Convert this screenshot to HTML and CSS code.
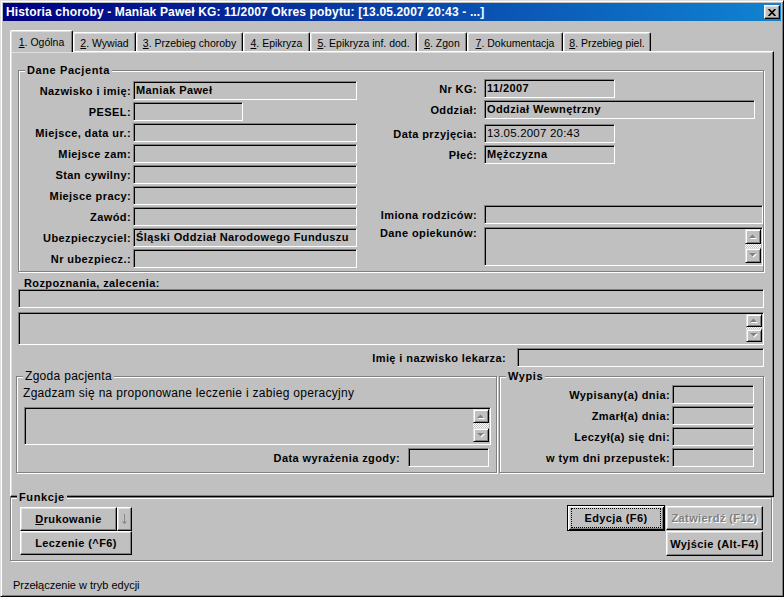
FILE: index.html
```html
<!DOCTYPE html>
<html lang="pl">
<head>
<meta charset="utf-8">
<title>Historia choroby</title>
<link rel="stylesheet" href="styles.css">
</head>
<body>
<div class="window">
  <div class="titlebar">
    <span class="title">Historia choroby - Maniak Paweł KG: 11/2007 Okres pobytu: [13.05.2007 20:43 - ...]</span>
    <span class="close-btn"><svg width="8" height="7" viewBox="0 0 8 7"><path d="M0.6 0 L7.4 7 M7.4 0 L0.6 7" stroke="#000" stroke-width="1.7" fill="none"/></svg></span>
  </div>

  <div class="tabs">
    <div class="tab active"><u>1</u>. Ogólna</div>
    <div class="tab"><u>2</u>. Wywiad</div>
    <div class="tab"><u>3</u>. Przebieg choroby</div>
    <div class="tab"><u>4</u>. Epikryza</div>
    <div class="tab"><u>5</u>. Epikryza inf. dod.</div>
    <div class="tab"><u>6</u>. Zgon</div>
    <div class="tab"><u>7</u>. Dokumentacja</div>
    <div class="tab"><u>8</u>. Przebieg piel.</div>
  </div>

  <div class="panel">
    <div class="group group-patient">
      <span class="legend b">Dane Pacjenta</span>
      <div class="col-left">
        <div class="row"><span class="lbl b">Nazwisko i imię:</span><div class="field w-lg b">Maniak Paweł</div></div>
        <div class="row"><span class="lbl b">PESEL:</span><div class="field w-sm"></div></div>
        <div class="row"><span class="lbl b">Miejsce, data ur.:</span><div class="field w-lg"></div></div>
        <div class="row"><span class="lbl b">Miejsce zam:</span><div class="field w-lg"></div></div>
        <div class="row"><span class="lbl b">Stan cywilny:</span><div class="field w-lg"></div></div>
        <div class="row"><span class="lbl b">Miejsce pracy:</span><div class="field w-lg"></div></div>
        <div class="row"><span class="lbl b">Zawód:</span><div class="field w-lg"></div></div>
        <div class="row"><span class="lbl b">Ubezpieczyciel:</span><div class="field w-lg b">Śląski Oddział Narodowego Funduszu</div></div>
        <div class="row"><span class="lbl b">Nr ubezpiecz.:</span><div class="field w-lg"></div></div>
      </div>
      <div class="col-right">
        <div class="row"><span class="lbl b">Nr KG:</span><div class="field w-131 b">11/2007</div></div>
        <div class="row gap-2"><span class="lbl b">Oddział:</span><div class="field w-271 b">Oddział Wewnętrzny</div></div>
        <div class="row gap-5"><span class="lbl b">Data przyjęcia:</span><div class="field w-131 date">13.05.2007 20:43</div></div>
        <div class="row gap-2"><span class="lbl b">Płeć:</span><div class="field w-131 b">Mężczyzna</div></div>
        <div class="row gap-41"><span class="lbl b">Imiona rodziców:</span><div class="field w-279"></div></div>
        <div class="row row-tall gap-3"><span class="lbl b">Dane opiekunów:</span>
          <div class="field memo w-279">
            <div class="vscroll">
              <span class="sb-btn"><svg width="8" height="5" viewBox="0 0 8 5"><path d="M3.5 0.5 L7 4 L0 4 Z" fill="#fff" transform="translate(1 1)"/><path d="M3.5 0.5 L7 4 L0 4 Z" fill="#808080"/></svg></span>
              <span class="sb-track"></span>
              <span class="sb-btn"><svg width="8" height="5" viewBox="0 0 8 5"><path d="M0 0 L7 0 L3.5 3.5 Z" fill="#fff" transform="translate(1 1)"/><path d="M0 0 L7 0 L3.5 3.5 Z" fill="#808080"/></svg></span>
            </div>
          </div>
        </div>
      </div>
    </div>

    <div class="diag-label b">Rozpoznania, zalecenia:</div>
    <div class="field diag-line"></div>
    <div class="field memo memo-sm diag-memo">
      <div class="vscroll">
        <span class="sb-btn"><svg width="8" height="5" viewBox="0 0 8 5"><path d="M3.5 0.5 L7 4 L0 4 Z" fill="#fff" transform="translate(1 1)"/><path d="M3.5 0.5 L7 4 L0 4 Z" fill="#808080"/></svg></span>
        <span class="sb-track"></span>
        <span class="sb-btn"><svg width="8" height="5" viewBox="0 0 8 5"><path d="M0 0 L7 0 L3.5 3.5 Z" fill="#fff" transform="translate(1 1)"/><path d="M0 0 L7 0 L3.5 3.5 Z" fill="#808080"/></svg></span>
      </div>
    </div>

    <div class="doctor-row">
      <span class="lbl b">Imię i nazwisko lekarza:</span>
      <div class="field w-doctor"></div>
    </div>

    <div class="bottom-groups">
      <div class="group group-consent">
        <span class="legend reg">Zgoda pacjenta</span>
        <div class="consent-text">Zgadzam się na proponowane leczenie i zabieg operacyjny</div>
        <div class="field memo memo-md consent-memo">
          <div class="vscroll">
            <span class="sb-btn"><svg width="8" height="5" viewBox="0 0 8 5"><path d="M3.5 0.5 L7 4 L0 4 Z" fill="#fff" transform="translate(1 1)"/><path d="M3.5 0.5 L7 4 L0 4 Z" fill="#808080"/></svg></span>
            <span class="sb-track"></span>
            <span class="sb-btn"><svg width="8" height="5" viewBox="0 0 8 5"><path d="M0 0 L7 0 L3.5 3.5 Z" fill="#fff" transform="translate(1 1)"/><path d="M0 0 L7 0 L3.5 3.5 Z" fill="#808080"/></svg></span>
          </div>
        </div>
        <div class="consent-date">
          <span class="lbl b">Data wyrażenia zgody:</span>
          <div class="field w-81"></div>
        </div>
      </div>

      <div class="group group-discharge">
        <span class="legend b">Wypis</span>
        <div class="wrow"><span class="lbl b">Wypisany(a) dnia:</span><div class="field w-82"></div></div>
        <div class="wrow"><span class="lbl b">Zmarł(a) dnia:</span><div class="field w-82"></div></div>
        <div class="wrow"><span class="lbl b">Leczył(a) się dni:</span><div class="field w-82"></div></div>
        <div class="wrow"><span class="lbl b">w tym dni przepustek:</span><div class="field w-82"></div></div>
      </div>
    </div>
  </div>

  <div class="group group-functions">
    <span class="legend b">Funkcje</span>
    <div class="fn-left">
      <div class="fn-print">
        <span class="btn btn-print b"><u>D</u>rukowanie</span>
        <span class="btn btn-arrow"><svg width="5" height="12" viewBox="0 0 5 12"><path d="M2.5 1 V11 M0.5 8 L2.5 11 L4.5 8" stroke="#8a8a8a" stroke-width="1" fill="none"/></svg></span>
      </div>
      <span class="btn btn-treat b">Leczenie (^F6)</span>
    </div>
    <div class="fn-right">
      <span class="btn btn-default b"><span class="focus">Edycja (F6)</span></span>
      <span class="btn btn-confirm b disabled">Zatwierdź (F12)</span>
      <span class="btn btn-exit b">Wyjście (Alt-F4)</span>
    </div>
  </div>

  <div class="status">Przełączenie w tryb edycji</div>
</div>
</body>
</html>
```

FILE: styles.css
```css
* { box-sizing: border-box; }
html, body { margin: 0; padding: 0; }
body {
  background: #c0c0c0;
  font-family: "Liberation Sans", Arial, sans-serif;
  font-size: 11px;
  color: #000;
}

.b { font-weight: bold; letter-spacing: 0.4px; }

.window {
  width: 784px;
  height: 597px;
  border: 1px solid;
  border-color: #dfdfdf #000 #000 #dfdfdf;
  box-shadow: inset 1px 1px #fff, inset -1px -1px #808080;
  padding: 2px;
  display: flex;
  flex-direction: column;
}

/* title bar */
.titlebar {
  height: 18px;
  background: linear-gradient(to right, #000080, #1084d0);
  display: flex;
  align-items: center;
  justify-content: space-between;
  padding: 0 1px 0 3px;
}
.title {
  color: #fff;
  font-weight: bold;
  font-size: 12px;
  letter-spacing: 0.15px;
  white-space: nowrap;
}
.close-btn {
  width: 16px;
  height: 14px;
  background: #c0c0c0;
  border: 1px solid;
  border-color: #fff #000 #000 #fff;
  box-shadow: inset -1px -1px #808080, inset 1px 1px #dfdfdf;
  display: flex;
  align-items: center;
  justify-content: center;
}

/* tabs */
.tabs {
  display: flex;
  align-items: flex-end;
  height: 21px;
  margin: 9px 0 0 7px;
  position: relative;
  z-index: 1;
}
.tab {
  height: 19px;
  padding-top: 2px;
  line-height: 16px;
  font-size: 10.5px;
  text-align: center;
  white-space: nowrap;
  border-top: 1px solid #fff;
  border-left: 1px solid #fff;
  border-right: 1px solid #000;
  border-radius: 2px 2px 0 0;
  box-shadow: inset -1px 0 #808080, inset 1px 1px #dfdfdf;
}
.tab.active {
  height: 22px;
  padding-top: 3px;
  margin-bottom: -1px;
  background: #c0c0c0;
}
.tab:nth-child(1) { width: 63px; }
.tab:nth-child(2) { width: 63px; }
.tab:nth-child(3) { width: 107px; }
.tab:nth-child(4) { width: 67px; }
.tab:nth-child(5) { width: 107px; }
.tab:nth-child(6) { width: 50px; }
.tab:nth-child(7) { width: 96px; }
.tab:nth-child(8) { width: 88px; }

/* tab panel */
.panel {
  margin: 0 7px;
  height: 446px;
  border: 1px solid;
  border-color: #fff #000 #000 #fff;
  box-shadow: inset -1px -1px #808080, inset 1px 1px #dfdfdf;
}

/* group boxes */
.group {
  position: relative;
  border: 1px solid #808080;
  box-shadow: inset 1px 1px #fff, 1px 1px #fff;
}
.legend {
  position: absolute;
  top: -7px;
  left: 6px;
  padding: 0 2px;
  line-height: 13px;
  background: #c0c0c0;
  white-space: nowrap;
}
.legend.b { letter-spacing: 0.6px; }
.legend.reg { font-size: 12px; letter-spacing: 0.3px; }

/* fields */
.field {
  height: 19px;
  background: #c0c0c0;
  border: 1px solid;
  border-color: #808080 #fff #fff #808080;
  box-shadow: inset 1px 1px #000;
  padding: 0 2px;
  display: flex;
  align-items: center;
  white-space: nowrap;
  overflow: hidden;
  line-height: 17px;
}
.field.date { font-size: 11.5px; letter-spacing: 0.2px; }

.row { display: flex; align-items: center; height: 19px; }
.lbl { text-align: right; white-space: nowrap; }

/* Dane Pacjenta */
.group-patient {
  margin: 18px 0 0 7px;
  width: 746px;
  height: 202px;
  padding-top: 10px;
  display: flex;
  align-items: flex-start;
}
.col-left { display: flex; flex-direction: column; gap: 2px; }
.col-left .lbl { width: 112px; margin-right: 2px; }
.w-lg { width: 224px; }
.w-sm { width: 110px; }

.col-right { display: flex; flex-direction: column; margin-top: -2px; }
.col-right .lbl { width: 120px; margin-right: 7px; }
.w-131 { width: 131px; }
.w-271 { width: 271px; }
.w-279 { width: 279px; }
.gap-2 { margin-top: 2px; }
.gap-3 { margin-top: 3px; }
.gap-5 { margin-top: 5px; }
.gap-41 { margin-top: 41px; }
.row-tall { height: 39px; align-items: flex-start; }
.row-tall .lbl { line-height: 13px; }
.row-tall .field { height: 39px; }

/* memo with scrollbar */
.field.memo {
  justify-content: flex-end;
  align-items: stretch;
  padding: 1px 1px 2px 0;
}
.vscroll { width: 16px; display: flex; flex-direction: column; }
.sb-btn {
  height: 15px;
  flex: 0 0 auto;
  background: #c0c0c0;
  border: 1px solid;
  border-color: #dfdfdf #000 #000 #dfdfdf;
  box-shadow: inset 1px 1px #fff, inset -1px -1px #808080;
  display: flex;
  align-items: center;
  justify-content: center;
}
.memo-sm .sb-btn { height: 13px; }
.memo-md .sb-btn { height: 14px; }
.sb-track {
  flex: 1;
  background-color: #c0c0c0;
  background-image: conic-gradient(#fff 25%, transparent 0 50%, #fff 0 75%, transparent 0);
  background-size: 2px 2px;
}

/* Rozpoznania */
.diag-label { margin: 5px 0 0 13px; line-height: 12px; }
.diag-line { margin-left: 7px; width: 746px; }
.diag-memo { margin: 4px 0 0 7px; width: 746px; height: 33px; }

.doctor-row {
  display: flex;
  align-items: center;
  justify-content: flex-end;
  margin: 3px 0 0 7px;
  width: 746px;
  height: 19px;
}
.doctor-row .lbl { margin-right: 11px; }
.w-doctor { width: 247px; }

/* bottom groups */
.bottom-groups { display: flex; margin: 9px 0 0 5px; }
.group-consent {
  width: 481px;
  height: 97px;
  padding-left: 6px;
}
.consent-text {
  margin-top: 10px;
  line-height: 12px;
  font-size: 12px;
  letter-spacing: 0.3px;
  white-space: nowrap;
}
.consent-memo { margin: 8px 0 0 1px; width: 467px; height: 38px; }
.consent-date {
  display: flex;
  align-items: center;
  justify-content: flex-end;
  width: 467px;
  height: 19px;
  margin-top: 3px;
}
.consent-date .lbl { margin-right: 8px; }
.w-81 { width: 81px; margin-right: 1px; }

.group-discharge {
  margin-left: 2px;
  width: 265px;
  height: 97px;
  padding: 8px 9px 0 0;
  display: flex;
  flex-direction: column;
  gap: 2px;
}
.wrow { display: flex; align-items: center; justify-content: flex-end; height: 19px; }
.wrow .lbl { margin-right: 2px; }
.w-82 { width: 82px; }

/* Funkcje */
.group-functions {
  margin-left: 7px;
  width: 762px;
  height: 64px;
  padding: 8px 8px 0 9px;
  display: flex;
  justify-content: space-between;
  align-items: flex-start;
}
.btn {
  background: #c0c0c0;
  border: 1px solid;
  border-color: #fff #000 #000 #fff;
  box-shadow: inset -1px -1px #808080, inset 1px 1px #dfdfdf;
  display: flex;
  align-items: center;
  justify-content: center;
  white-space: nowrap;
}
.fn-left { margin-top: 1px; display: flex; flex-direction: column; }
.fn-print { display: flex; }
.btn-print { width: 97px; height: 24px; }
.btn-arrow { width: 15px; height: 24px; }
.btn-treat { width: 112px; height: 24px; }

.fn-right {
  margin-top: -1px;
  display: grid;
  grid-template-columns: 98px 97px;
  column-gap: 1px;
  align-items: start;
}
.btn-default {
  height: 26px;
  border: 1px solid #000;
  box-shadow: inset 1px 1px #fff, inset -1px -1px #000, inset 2px 2px #dfdfdf, inset -2px -2px #808080;
  align-items: stretch;
  justify-content: stretch;
}
.focus {
  flex: 1;
  margin: 2px 3px 2px 3px;
  border: 1px dotted #000;
  display: flex;
  align-items: center;
  justify-content: center;
}
.btn-confirm { height: 24px; margin-top: 1px; }
.btn-exit { grid-column: 2; height: 25px; }
.disabled { color: #808080; text-shadow: 1px 1px #fff; }

.status {
  margin-top: 18px;
  padding-left: 10px;
  line-height: 13px;
  font-size: 11px;
}
```
